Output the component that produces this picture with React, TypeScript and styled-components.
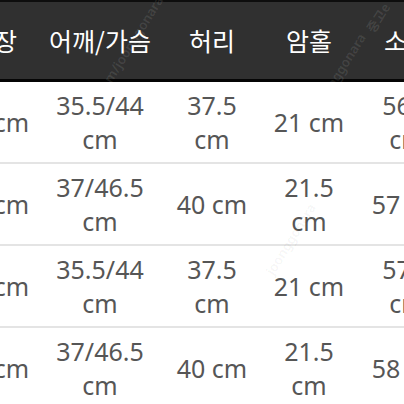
import React from "react";
import styled, { createGlobalStyle } from "styled-components";

const Global = createGlobalStyle`
  html, body { margin: 0; padding: 0; background: #ffffff; }
  body { width: 404px; height: 404px; overflow: hidden; }
  #root { width: 404px; height: 404px; overflow: hidden; position: relative; }
`;

const COLS = "100px 112px 112px 82px 114px";

const Table = styled.div`
  margin-left: -56px;
  width: 520px;
  font-family: "Noto Sans", "Noto Sans CJK KR", sans-serif;
`;

const HeadRow = styled.div`
  display: grid;
  grid-template-columns: ${COLS};
  height: 77px;
  background: #303030;
  border-top: 2px solid #0d0d0d;
  border-bottom: 3px solid #050505;
`;

const HeadCell = styled.div`
  display: flex;
  align-items: center;
  justify-content: center;
  color: #ffffff;
  font-family: "Noto Sans CJK KR", "Noto Sans", sans-serif;
  font-size: 25px;
  padding-bottom: 2px;
  white-space: nowrap;
`;

const Row = styled.div`
  display: grid;
  grid-template-columns: ${COLS};
  height: 80px;
  background: #ffffff;
  border-bottom: 2px solid #e4e4e4;
`;

const Cell = styled.div`
  display: flex;
  flex-direction: column;
  align-items: center;
  justify-content: center;
  color: #565656;
  font-size: 25px;
  white-space: nowrap;
`;

const Line = styled.span`
  display: block;
`;

const Mark = styled.span<{ $dark?: boolean }>`
  position: absolute;
  font-family: "Noto Sans", "Noto Sans CJK KR", sans-serif;
  font-size: 13px;
  font-weight: 600;
  transform: rotate(-58deg);
  transform-origin: center;
  color: ${(p) => (p.$dark ? "rgba(255,255,255,0.10)" : "rgba(0,0,0,0.05)")};
  white-space: nowrap;
  pointer-events: none;
`;

const headers = ["총장", "어깨/가슴", "허리", "암홀", "소매"];

const rows: string[][][] = [
  [["66 cm"], ["35.5/44", "cm"], ["37.5", "cm"], ["21 cm"], ["56.5", "cm"]],
  [["68 cm"], ["37/46.5", "cm"], ["40 cm"], ["21.5", "cm"], ["57 cm"]],
  [["66 cm"], ["35.5/44", "cm"], ["37.5", "cm"], ["21 cm"], ["57.5", "cm"]],
  [["68 cm"], ["37/46.5", "cm"], ["40 cm"], ["21.5", "cm"], ["58 cm"]],
];

export default function App() {
  return (
    <>
      <Global />
      <Table>
        <HeadRow>
          {headers.map((h) => (
            <HeadCell key={h}>{h}</HeadCell>
          ))}
        </HeadRow>
        {rows.map((r, i) => (
          <Row key={i}>
            {r.map((c, j) => (
              <Cell key={j}>
                {c.map((l, k) => (
                  <Line key={k}>{l}</Line>
                ))}
              </Cell>
            ))}
          </Row>
        ))}
      </Table>
      <Mark $dark style={{ left: 70, top: 38 }}>.com/joonggonara</Mark>
      <Mark $dark style={{ left: 300, top: 60 }}>joonggonara</Mark>
      <Mark $dark style={{ left: 362, top: 8 }}>중고e</Mark>
      <Mark style={{ left: 250, top: 230 }}>joonggonara</Mark>
    </>
  );
}
